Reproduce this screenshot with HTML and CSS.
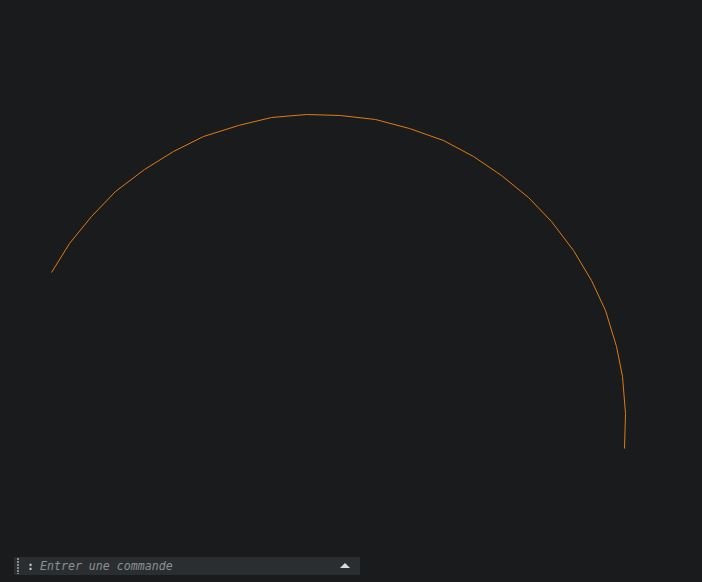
FILE: index.html
```html
<!DOCTYPE html>
<html lang="fr">
<head>
<meta charset="utf-8">
<link rel="stylesheet" href="styles.css">
</head>
<body>
<div class="app">
  <svg class="canvas" width="702" height="556" viewBox="0 0 702 556">
    <polyline class="arc" points="51.5,272.5 69.5,243.5 91.5,216.5 115.5,191.5 144.5,169.5 173.5,151.5 203.5,136.5 238.5,125.5 271.5,117.5 306.5,114.5 340.5,115.5 375.5,119.5 409.5,128.5 443.5,140.5 473.5,156.5 501.5,175.5 528.5,197.5 551.5,221.5 573.5,250.5 591.5,280.5 605.5,310.5 616.5,346.5 622.5,376.5 625.5,413.5 624.5,448.5"/>
  </svg>
  <div class="cmdbar">
    <span class="grip"></span>
    <span class="colon">:</span>
    <span class="placeholder">Entrer une commande</span>
    <span class="arrow"></span>
  </div>
</div>
</body>
</html>
```
FILE: styles.css
```css
html, body {
  margin: 0;
  padding: 0;
  background: #1a1b1d;
  width: 702px;
  height: 582px;
  overflow: hidden;
}
.app {
  display: flex;
  flex-direction: column;
  width: 702px;
  height: 582px;
}
.canvas {
  display: block;
  flex: none;
}
.arc {
  fill: none;
  stroke: #e07a12;
  stroke-width: 1;
}
.cmdbar {
  margin-top: 1px;
  margin-left: 14px;
  width: 346px;
  height: 18px;
  background: #2a2e30;
  display: flex;
  align-items: center;
  font-family: "DejaVu Sans Mono", monospace;
  font-size: 11.6px;
}
.grip {
  width: 2px;
  height: 16px;
  margin-left: 3px;
  background: repeating-linear-gradient(to bottom, #8a8d8e 0 2px, transparent 2px 3px);
}
.colon {
  margin-left: 8px;
  color: #c8cccc;
  font-weight: bold;
  width: 7px;
}
.placeholder {
  margin-left: 6px;
  color: #8b9191;
  font-style: italic;
  flex: 1;
}
.arrow {
  width: 0;
  height: 0;
  border-left: 5px solid transparent;
  border-right: 5px solid transparent;
  border-bottom: 5px solid #d8dadb;
  margin-right: 10px;
  margin-top: -1px;
}
```
